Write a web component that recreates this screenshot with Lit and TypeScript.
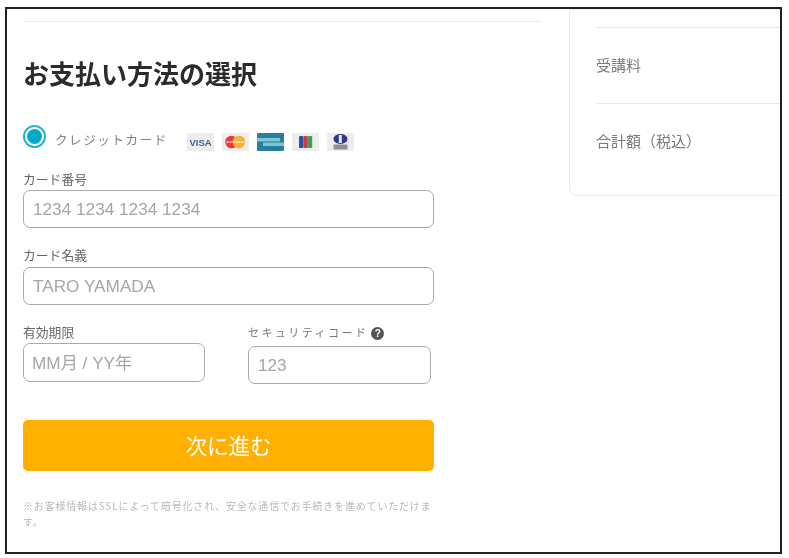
import { LitElement, html, css, svg } from "lit";
import { customElement } from "lit/decorators.js";

@customElement("app-root")
export class AppRoot extends LitElement {
  static styles = css`
    :host { display: block; width: 789px; height: 558px; background: #fff; box-sizing: border-box; padding: 7px 7px 4px 5px; font-family: "Noto Sans CJK JP", "Liberation Sans", sans-serif; }
    .frame { box-sizing: border-box; width: 777px; height: 547px; border: 2px solid #222; overflow: hidden; display: flex; align-items: flex-start; padding-left: 16px; background: #fff; }
    .left { width: 519px; flex: none; filter: blur(0.5px); }
    .rule { height: 1px; background: #ececec; margin-top: 12px; }
    h1 { margin: 36px 0 0; font-size: 26px; line-height: 30px; font-weight: 700; color: #2b2b2b; height: 30px; }
    .method { display: flex; align-items: flex-start; margin-top: 37px; height: 42px; }
    .radio { width: 23px; height: 23px; box-sizing: border-box; border: 2px solid #22b5d3; border-radius: 50%; padding: 2px; flex: none; background: #fff; }
    .radio i { display: block; width: 15px; height: 15px; border-radius: 50%; background: #00acc8; }
    .method-label { margin: 6px 0 0 9px; font-size: 12.5px; line-height: 18px; letter-spacing: 1.6px; color: #808080; width: 132px; flex: none; white-space: nowrap; }
    .brands { display: flex; gap: 8px; margin-top: 8px; }
    .brands svg { display: block; }
    .form { width: 411px; }
    label { display: block; font-size: 12.8px; line-height: 16px; color: #666; white-space: nowrap; }
    .box { box-sizing: border-box; height: 38px; border: 1.5px solid #aaa; border-radius: 7px; padding: 0 9px; display: flex; align-items: center; font-family: "Liberation Sans", "Noto Sans CJK JP", sans-serif; font-size: 17.2px; color: #a6a6a6; background: #fff; white-space: nowrap; }
    .f1 label { margin-top: 4px; }
    .f1 .box { margin-top: 3px; }
    .f2 { margin-top: 19px; }
    .f2 .box { margin-top: 4px; }
    .split { display: flex; gap: 43px; margin-top: 19px; align-items: flex-start; }
    .exp { width: 182px; flex: none; }
    .exp .box { margin-top: 3px; height: 39px; padding: 0 8px 3px; }
    .sec { width: 183px; flex: none; }
    .sec label { letter-spacing: 2.45px; font-size: 11px; display: flex; align-items: center; gap: 3px; color: #777; }
    .sec .box { margin-top: 6px; }
    .q { width: 13px; height: 13px; border-radius: 50%; background: #555; color: #fff; font: 700 10px/13px "Liberation Sans", sans-serif; text-align: center; letter-spacing: 0; margin-top: 3px; }
    .next { box-sizing: border-box; display: flex; align-items: center; justify-content: center; width: 411px; height: 51px; margin-top: 36px; padding-bottom: 2px; border-radius: 5px; background: #ffb000; color: #fff; font-size: 21.5px; }
    .note { margin: 27px 0 0; width: 411px; font-size: 10px; line-height: 16px; letter-spacing: 0.82px; color: #b9b9b9; }
    .side { box-sizing: border-box; width: 300px; flex: none; height: 187px; margin-left: 27px; border: 1px solid #ececec; border-radius: 0 0 0 8px; padding: 0 0 0 26px; filter: blur(0.5px); }
    .row { box-sizing: border-box; border-top: 1px solid #e8e8e8; height: 76px; padding-bottom: 2px; display: flex; align-items: center; font-size: 15px; color: #7a7a7a; }
    .row:first-child { margin-top: 17px; }
  `;

  private brand(body: unknown, bg = "#ededed") {
    return html`<svg width="27" height="18" viewBox="0 0 27 18">
      <rect width="27" height="18" rx="1" fill=${bg}></rect>${body}
    </svg>`;
  }

  render() {
    const visa = svg`<text x="13.5" y="12.8" font-family="Liberation Sans, sans-serif" font-size="9.5" font-weight="700" text-anchor="middle" fill="#46599f">VISA</text>`;
    const mc = svg`<circle cx="9.5" cy="9" r="6.3" fill="#ea3a3a"></circle><circle cx="17" cy="9" r="6.3" fill="#f5b335"></circle><rect x="4" y="8" width="19" height="2" fill="#fff" opacity=".45"></rect>`;
    const amex = svg`<rect x="0" y="5" width="23" height="3.5" fill="#82c3d2"></rect><rect x="6" y="9.5" width="21" height="3.5" fill="#82c3d2"></rect>`;
    const jcb = svg`<rect x="7" y="3" width="4.4" height="12" rx="1" fill="#2a4fb0"></rect><rect x="11.4" y="3" width="4.4" height="12" rx="1" fill="#d9343f"></rect><rect x="15.8" y="3" width="4.4" height="12" rx="1" fill="#3ea04a"></rect>`;
    const diners = svg`<ellipse cx="13.5" cy="6" rx="7" ry="5" fill="#2c3b8f"></ellipse><rect x="11.8" y="2" width="3" height="8" fill="#e8e8ef"></rect><rect x="6.5" y="11.5" width="14" height="5" fill="#8f8f8f"></rect>`;
    return html`
      <div class="frame">
        <div class="left">
          <div class="rule"></div>
          <h1>お支払い方法の選択</h1>
          <div class="method">
            <div class="radio"><i></i></div>
            <div class="method-label">クレジットカード</div>
            <div class="brands">
              ${this.brand(visa)}${this.brand(mc)}${this.brand(amex, "#267f9b")}${this.brand(jcb)}${this.brand(diners)}
            </div>
          </div>
          <div class="form">
            <div class="f1"><label>カード番号</label><div class="box">1234 1234 1234 1234</div></div>
            <div class="f2"><label>カード名義</label><div class="box">TARO YAMADA</div></div>
            <div class="split">
              <div class="exp"><label>有効期限</label><div class="box">MM月 / YY年</div></div>
              <div class="sec"><label>セキュリティコード<span class="q">?</span></label><div class="box">123</div></div>
            </div>
            <div class="next">次に進む</div>
            <p class="note">※お客様情報はSSLによって暗号化され、安全な通信でお手続きを進めていただけます。</p>
          </div>
        </div>
        <div class="side">
          <div class="row">受講料</div>
          <div class="row">合計額（税込）</div>
        </div>
      </div>
    `;
  }
}
